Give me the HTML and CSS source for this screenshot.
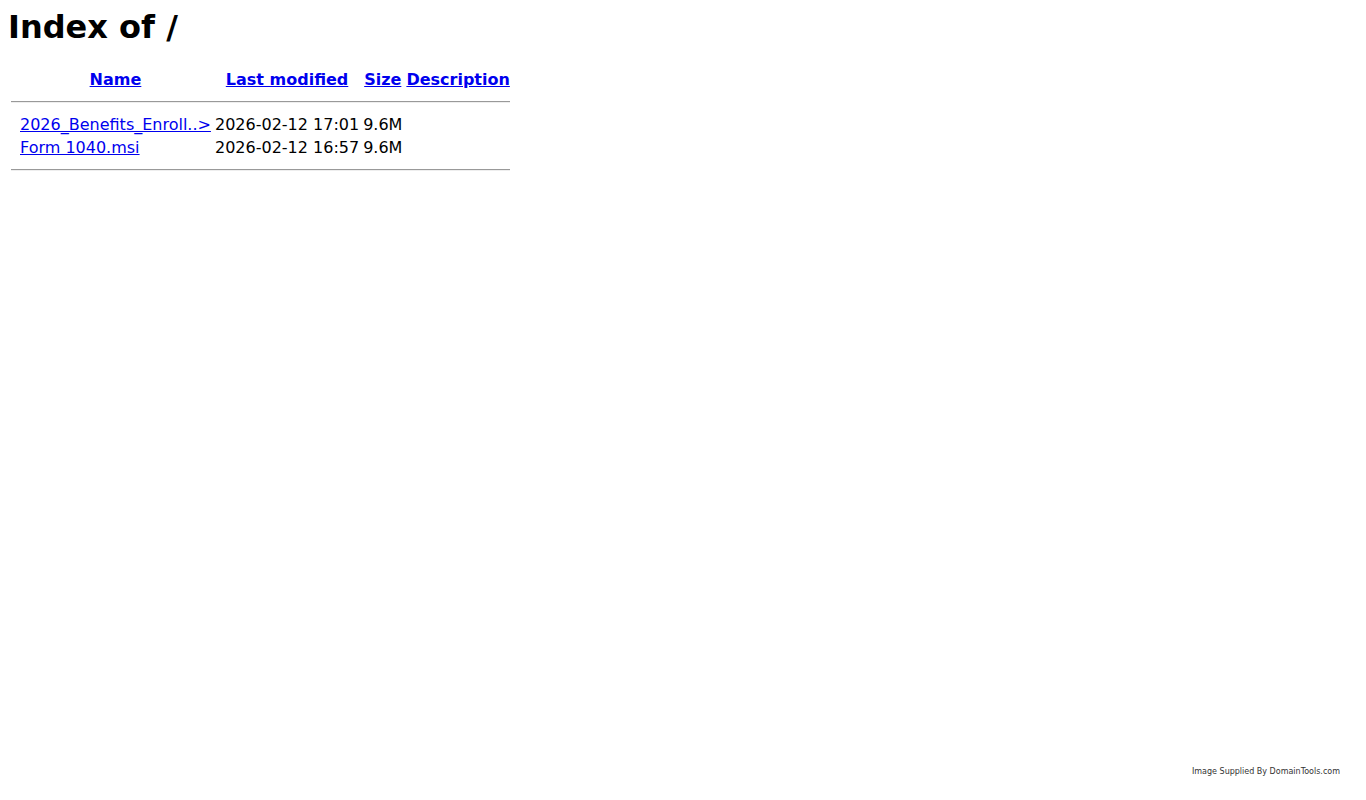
FILE: index.html
```html
<!DOCTYPE html>
<html>
<head>
<meta charset="utf-8">
<title>Index of /</title>
<link rel="stylesheet" href="styles.css">
</head>
<body>
<h1 class="title">Index of /</h1>
<table class="listing">
<tr><th class="ico"><span class="img"></span></th><th><a href="#">Name</a></th><th><a href="#">Last modified</a></th><th><a href="#">Size</a></th><th><a href="#">Description</a></th></tr>
<tr><th colspan="5"><hr class="rule"></th></tr>
<tr><td class="ico"><span class="img"></span></td><td><a href="#">2026_Benefits_Enroll..&gt;</a></td><td class="r">2026-02-12 17:01</td><td class="r">9.6M</td><td>&nbsp;</td></tr>
<tr><td class="ico"><span class="img"></span></td><td><a href="#">Form 1040.msi</a></td><td class="r">2026-02-12 16:57</td><td class="r">9.6M</td><td>&nbsp;</td></tr>
<tr><th colspan="5"><hr class="rule"></th></tr>
</table>
<div class="watermark">Image Supplied By DomainTools.com</div>
</body>
</html>
```

FILE: styles.css
```css
html, body {
  background: #fff;
}
body {
  margin: 8px;
  font-family: "DejaVu Sans", sans-serif;
  font-size: 16px;
  color: #000;
}
.title {
  font-size: 32px;
  font-weight: bold;
  margin: 0 0 21px;
}
.listing a {
  color: #0000ee;
}
.ico {
  vertical-align: top;
}
.img {
  display: inline-block;
  width: 5px;
  height: 1px;
}
.r {
  text-align: right;
}
.rule {
  margin: 8px 0;
  border: none;
  border-top: 1px solid #999;
  border-bottom: 1px solid #eee;
}
.watermark {
  position: absolute;
  right: 26px;
  top: 767px;
  font-family: "DejaVu Sans", sans-serif;
  font-size: 8px;
  color: #333;
}
```
